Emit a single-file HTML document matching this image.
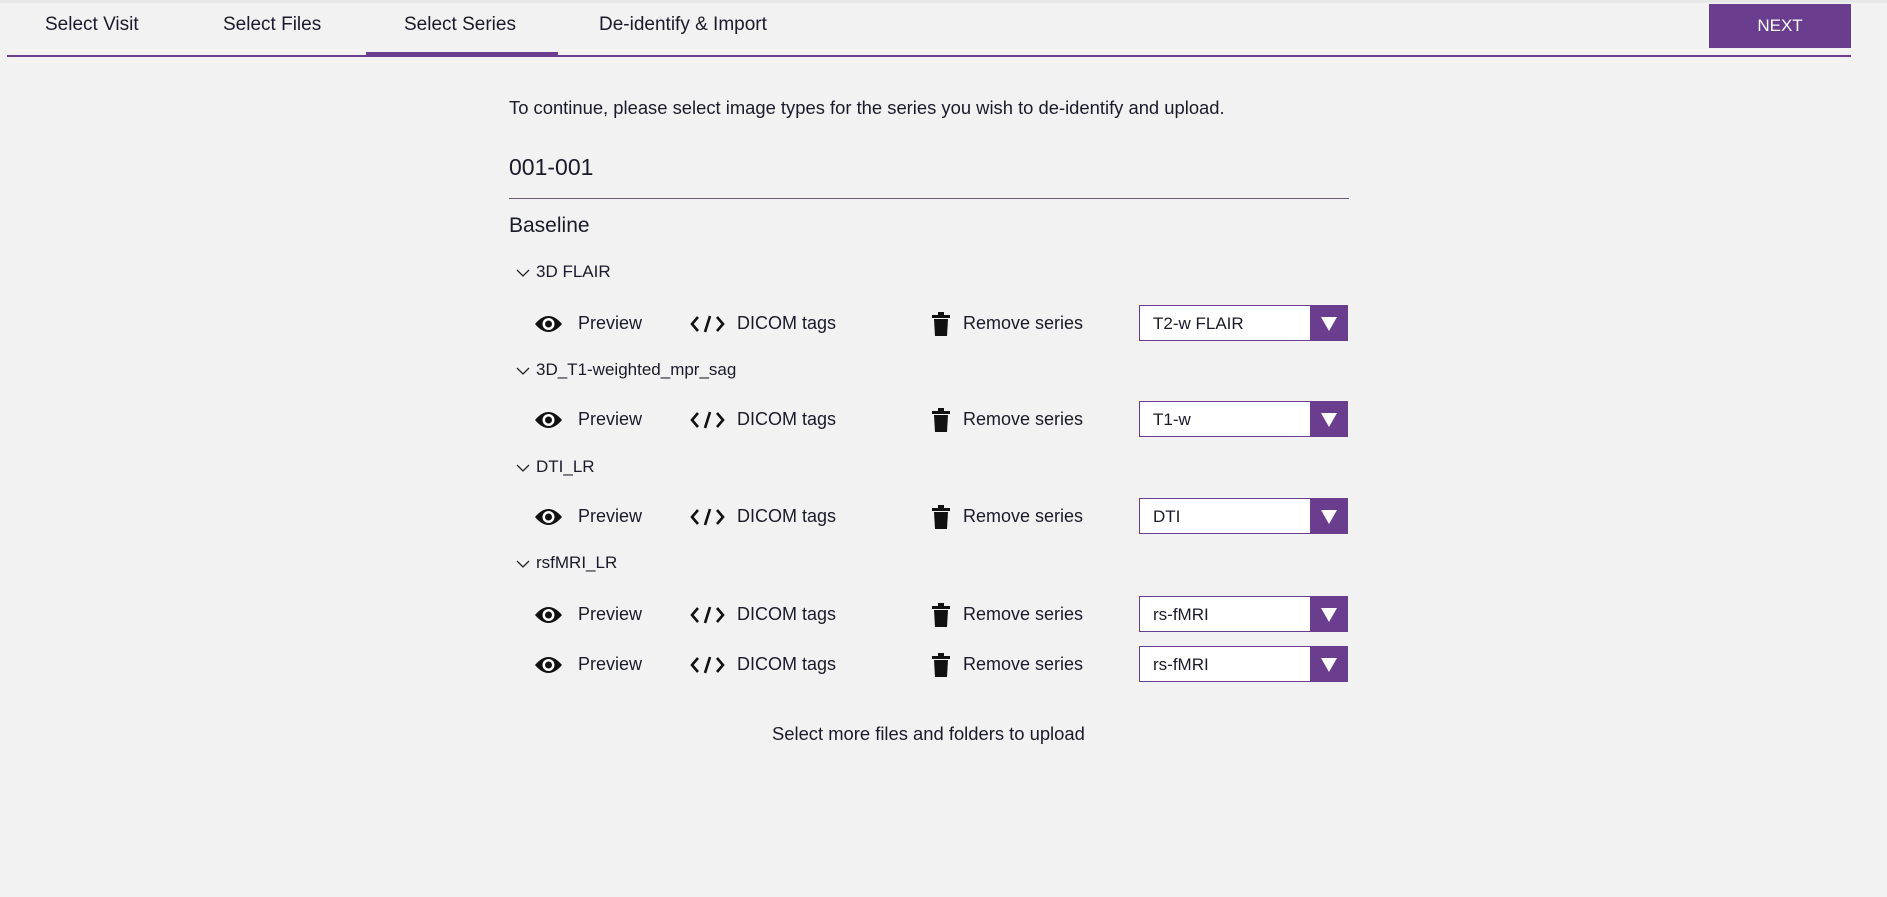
<!DOCTYPE html>
<html><head><style>
body{margin:0;width:1887px;height:897px;background:#f2f2f2;font-family:"Liberation Sans",sans-serif;color:#1a1a2a;position:relative;overflow:hidden}
.a{position:absolute;white-space:nowrap}
.tab{font-size:19px;top:14px}
.row{font-size:18px}
.sel{position:absolute;width:209px;height:36px;border:1px solid #6a3d8f;background:#fff;box-sizing:border-box}
.sel span{position:absolute;left:13px;top:8px;font-size:17px}
.sel i{position:absolute;right:0;top:0;width:37px;height:34px;background:#6a3d8f}
.sel i:after{content:"";position:absolute;left:11px;top:11px;border-left:8px solid transparent;border-right:8px solid transparent;border-top:14px solid #fff}
</style></head><body>
<div class="a" style="left:0;top:0;width:1887px;height:3px;background:#e8e8e8"></div>
<div class="a tab" style="left:45px">Select Visit</div>
<div class="a tab" style="left:223px">Select Files</div>
<div class="a tab" style="left:404px">Select Series</div>
<div class="a tab" style="left:599px">De-identify &amp; Import</div>
<div class="a" style="left:7px;top:55px;width:1844px;height:2px;background:#6a3d8f"></div>
<div class="a" style="left:366px;top:52px;width:192px;height:4px;background:#6a3d8f"></div>
<div class="a" style="left:1709px;top:4px;width:142px;height:44px;background:#6a3d8f;color:#fff;font-size:17px;text-align:center;line-height:44px">NEXT</div>
<div class="a" style="left:509px;top:97px;font-size:18.4px">To continue, please select image types for the series you wish to de-identify and upload.</div>
<div class="a" style="left:509px;top:154px;font-size:23px">001-001</div>
<div class="a" style="left:509px;top:198px;width:840px;height:1px;background:#6a5a7a"></div>
<div class="a" style="left:509px;top:214px;font-size:21px">Baseline</div>
<div id="c"></div>
<div class="a" style="left:772px;top:723px;font-size:18.4px">Select more files and folders to upload</div>
<script>
var h=[["3D FLAIR",273],["3D_T1-weighted_mpr_sag",371],["DTI_LR",468],["rsfMRI_LR",564]];
var r=[[323,"T2-w FLAIR"],[419,"T1-w"],[516,"DTI"],[614,"rs-fMRI"],[664,"rs-fMRI"]];
var o="";
h.forEach(function(x){o+='<svg class="a" style="left:516px;top:'+(x[1]-4)+'px" width="14" height="9"><path d="M1 1L7 7L13 1" fill="none" stroke="#222" stroke-width="1.3"/></svg><div class="a" style="left:536px;top:'+(x[1]-11)+'px;font-size:17px">'+x[0]+'</div>';});
r.forEach(function(x){var y=x[0]+1;
o+='<svg class="a" style="left:534px;top:'+(y-10)+'px" width="29" height="20" viewBox="0 0 29 20"><path d="M1 10Q14.5 -6 28 10Q14.5 26 1 10Z" fill="#111"/><circle cx="14.5" cy="10" r="6" fill="#fff"/><circle cx="14.5" cy="10" r="3.5" fill="#111"/></svg>';
o+='<div class="a row" style="left:578px;top:'+(y-11)+'px">Preview</div>';
o+='<svg class="a" style="left:690px;top:'+(y-9)+'px" width="35" height="18"><path d="M8 2L2 9L8 16M27 2L33 9L27 16M20 1L15 17" fill="none" stroke="#111" stroke-width="2.6"/></svg>';
o+='<div class="a row" style="left:737px;top:'+(y-11)+'px">DICOM tags</div>';
o+='<svg class="a" style="left:932px;top:'+(y-12)+'px" width="18" height="24"><rect x="0" y="3" width="18" height="3" fill="#111"/><rect x="6" y="0" width="6" height="3" fill="#111"/><path d="M2 7H16L15 24H3Z" fill="#111"/></svg>';
o+='<div class="a row" style="left:963px;top:'+(y-11)+'px">Remove series</div>';
o+='<div class="sel" style="left:1139px;top:'+(y-19)+'px"><span>'+x[1]+'</span><i></i></div>';});
document.getElementById("c").innerHTML=o;
</script>
</body></html>
